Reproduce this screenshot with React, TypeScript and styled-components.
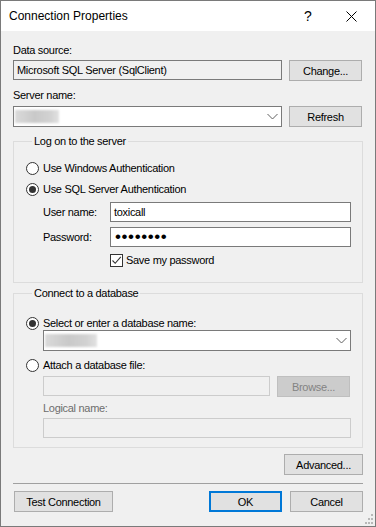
import React from 'react';
import styled, { createGlobalStyle } from 'styled-components';

const GlobalStyle = createGlobalStyle`
  html, body {
    margin: 0;
    padding: 0;
    background: #ffffff;
  }
  body {
    font-family: "Liberation Sans", Arial, sans-serif;
    font-size: 11px;
    letter-spacing: -0.3px;
    color: #000000;
  }
  * {
    box-sizing: border-box;
  }
`;

const Window = styled.div`
  position: relative;
  width: 376px;
  height: 527px;
  border: 1px solid #7a7a7a;
  background: #f0f0f0;
  display: flex;
  flex-direction: column;
  overflow: hidden;
`;

const TitleBar = styled.div`
  height: 30px;
  flex: none;
  background: #ffffff;
  display: flex;
  align-items: center;
  padding-left: 8px;
  padding-right: 14px;
  letter-spacing: 0;
`;

const Title = styled.div`
  flex: 1;
  font-size: 12px;
`;

const CaptionButton = styled.div`
  width: 20px;
  height: 20px;
  display: flex;
  align-items: center;
  justify-content: center;
  font-size: 14px;
`;

const CaptionGap = styled.div`
  width: 23px;
`;

const Body = styled.div`
  flex: 1;
  display: flex;
  flex-direction: column;
  padding: 12px 12px 0 12px;
`;

const Label = styled.div<{ $mt?: number; $mb?: number; $disabled?: boolean }>`
  line-height: 15px;
  height: 15px;
  margin-top: ${p => p.$mt ?? 0}px;
  margin-bottom: ${p => p.$mb ?? 0}px;
  color: ${p => (p.$disabled ? '#6d6d6d' : '#000000')};
  white-space: nowrap;
`;

const Row = styled.div<{ $mt?: number; $gap?: number }>`
  display: flex;
  align-items: flex-start;
  gap: ${p => p.$gap ?? 7}px;
  margin-top: ${p => p.$mt ?? 0}px;
`;

const TextBox = styled.div<{ $w: number; $h?: number; $variant?: 'normal' | 'readonly' | 'disabled' }>`
  width: ${p => p.$w}px;
  height: ${p => p.$h ?? 20}px;
  flex: none;
  display: flex;
  align-items: center;
  padding-left: 3px;
  background: ${p => (p.$variant === 'normal' || !p.$variant ? '#ffffff' : '#f0f0f0')};
  border: 1px solid ${p => (p.$variant === 'disabled' ? '#cccccc' : '#7a7a7a')};
  white-space: nowrap;
  overflow: hidden;
`;

const Combo = styled.div<{ $w: number }>`
  position: relative;
  width: ${p => p.$w}px;
  height: 21px;
  flex: none;
  display: flex;
  align-items: center;
  padding-left: 1px;
  background: #ffffff;
  border: 1px solid #7a7a7a;
`;

const Blurred = styled.div<{ $w: number }>`
  width: ${p => p.$w}px;
  height: 13px;
  background: linear-gradient(90deg, #dadada 0%, #c9c9c9 45%, #d2d2d2 80%, #e2e2e2 100%);
  filter: blur(0.8px);
`;

const ChevronWrap = styled.div`
  margin-left: auto;
  width: 17px;
  height: 19px;
  display: flex;
  align-items: center;
  justify-content: center;
`;

const Button = styled.div<{ $w: number; $default?: boolean; $disabled?: boolean }>`
  width: ${p => p.$w}px;
  height: 21px;
  flex: none;
  display: flex;
  align-items: center;
  justify-content: center;
  background: ${p => (p.$disabled ? '#cccccc' : '#e1e1e1')};
  border: ${p => (p.$default ? '2px solid #0078d7' : p.$disabled ? '1px solid #bfbfbf' : '1px solid #adadad')};
  color: ${p => (p.$disabled ? '#838383' : '#000000')};
  white-space: nowrap;
`;

const Group = styled.fieldset<{ $mt: number; $pt: number; $pb: number }>`
  margin: ${p => p.$mt}px 0 0 0;
  padding: ${p => p.$pt}px 11px ${p => p.$pb}px 12px;
  border: 1px solid #dcdcdc;
  min-width: 0;
`;

const Legend = styled.legend`
  margin-left: 6px;
  padding: 0 2px;
  line-height: 14px;
  height: 14px;
`;

const RadioRow = styled.div<{ $mt?: number }>`
  display: flex;
  align-items: center;
  height: 14px;
  gap: 4px;
  margin-top: ${p => p.$mt ?? 0}px;
  white-space: nowrap;
`;

const RadioCircle = styled.span<{ $checked?: boolean }>`
  width: 13px;
  height: 13px;
  flex: none;
  border: 1px solid #333333;
  border-radius: 50%;
  background: #ffffff;
  display: flex;
  align-items: center;
  justify-content: center;
  &::after {
    content: '';
    width: 7px;
    height: 7px;
    border-radius: 50%;
    background: ${p => (p.$checked ? '#333333' : 'transparent')};
  }
`;

const Indent = styled.div<{ $mt?: number }>`
  margin-left: 17px;
  margin-top: ${p => p.$mt ?? 0}px;
`;

const CredGrid = styled.div`
  display: grid;
  grid-template-columns: 67px 241px;
  row-gap: 5px;
  align-items: center;
`;

const Dots = styled.span`
  font-size: 17px;
  letter-spacing: 0.6px;
  line-height: 16px;
  margin-left: 1px;
`;

const CheckRow = styled.div`
  grid-column: 2;
  display: flex;
  align-items: center;
  gap: 3px;
  height: 20px;
  margin-top: -2px;
  white-space: nowrap;
`;

const CheckBox = styled.span`
  width: 13px;
  height: 13px;
  flex: none;
  border: 1px solid #333333;
  background: #ffffff;
  display: flex;
  align-items: center;
  justify-content: center;
`;

const Separator = styled.div`
  margin-top: 8px;
  height: 1px;
  background: #a0a0a0;
`;

const RightRow = styled.div<{ $mt: number }>`
  display: flex;
  justify-content: flex-end;
  margin-top: ${p => p.$mt}px;
`;

const BottomRow = styled.div`
  display: flex;
  align-items: center;
  gap: 8px;
  margin-top: 7px;
  padding-left: 1px;
`;

const Spacer = styled.div`
  flex: 1;
`;

const Grip = styled.svg`
  position: absolute;
  right: 1px;
  bottom: 1px;
`;

const Chevron = () => (
  <svg width="11" height="7" viewBox="0 0 11 7">
    <path d="M0.5 1 L5.5 6 L10.5 1" fill="none" stroke="#606060" strokeWidth="1" />
  </svg>
);

const ComboBox = ({ w, blur }: { w: number; blur: number }) => (
  <Combo $w={w}>
    <Blurred $w={blur} />
    <ChevronWrap>
      <Chevron />
    </ChevronWrap>
  </Combo>
);

const Radio = ({ checked, label, mt }: { checked?: boolean; label: string; mt?: number }) => (
  <RadioRow $mt={mt}>
    <RadioCircle $checked={checked} />
    {label}
  </RadioRow>
);

export default function App() {
  return (
    <>
      <GlobalStyle />
      <Window>
        <TitleBar>
          <Title>Connection Properties</Title>
          <CaptionButton>?</CaptionButton>
          <CaptionGap />
          <CaptionButton>
            <svg width="11" height="11" viewBox="0 0 11 11">
              <path d="M0.5 0.5 L10.5 10.5 M10.5 0.5 L0.5 10.5" stroke="#000" strokeWidth="1" />
            </svg>
          </CaptionButton>
        </TitleBar>

        <Body>
          <Label $mb={2}>Data source:</Label>
          <Row>
            <TextBox $w={269} $variant="readonly">
              Microsoft SQL Server (SqlClient)
            </TextBox>
            <Button $w={73}>Change...</Button>
          </Row>

          <Label $mt={7} $mb={3}>
            Server name:
          </Label>
          <Row>
            <ComboBox w={269} blur={44} />
            <Button $w={73}>Refresh</Button>
          </Row>

          <Group $mt={7} $pt={13} $pb={12}>
            <Legend>Log on to the server</Legend>
            <Radio label="Use Windows Authentication" />
            <Radio label="Use SQL Server Authentication" checked mt={7} />
            <Indent $mt={6}>
              <CredGrid>
                <span>User name:</span>
                <TextBox $w={241}>toxicall</TextBox>
                <span>Password:</span>
                <TextBox $w={241}>
                  <Dots>••••••••</Dots>
                </TextBox>
                <CheckRow>
                  <CheckBox>
                    <svg width="11" height="11" viewBox="0 0 11 11">
                      <path d="M1.5 5.5 L4.2 8.3 L9.8 1.8" fill="none" stroke="#333" strokeWidth="1.1" />
                    </svg>
                  </CheckBox>
                  Save my password
                </CheckRow>
              </CredGrid>
            </Indent>
          </Group>

          <Group $mt={3} $pt={16} $pb={9}>
            <Legend>Connect to a database</Legend>
            <Radio label="Select or enter a database name:" checked />
            <Indent>
              <ComboBox w={308} blur={52} />
            </Indent>
            <Radio label="Attach a database file:" mt={7} />
            <Indent $mt={4}>
              <Row $gap={7}>
                <TextBox $w={227} $variant="disabled" />
                <Button $w={73} $disabled>
                  Browse...
                </Button>
              </Row>
              <Label $mt={4} $mb={2} $disabled>
                Logical name:
              </Label>
              <TextBox $w={308} $variant="disabled" />
            </Indent>
          </Group>

          <RightRow $mt={6}>
            <Button $w={79}>Advanced...</Button>
          </RightRow>
          <Separator />
          <BottomRow>
            <Button $w={99}>Test Connection</Button>
            <Spacer />
            <Button $w={73} $default>
              OK
            </Button>
            <Button $w={73}>Cancel</Button>
          </BottomRow>
        </Body>

        <Grip width="11" height="11" viewBox="0 0 11 11">
          <g fill="#b8b8b8">
            <rect x="8" y="0" width="2" height="2" />
            <rect x="5" y="4" width="2" height="2" />
            <rect x="8" y="4" width="2" height="2" />
            <rect x="2" y="8" width="2" height="2" />
            <rect x="5" y="8" width="2" height="2" />
            <rect x="8" y="8" width="2" height="2" />
          </g>
        </Grip>
      </Window>
    </>
  );
}
